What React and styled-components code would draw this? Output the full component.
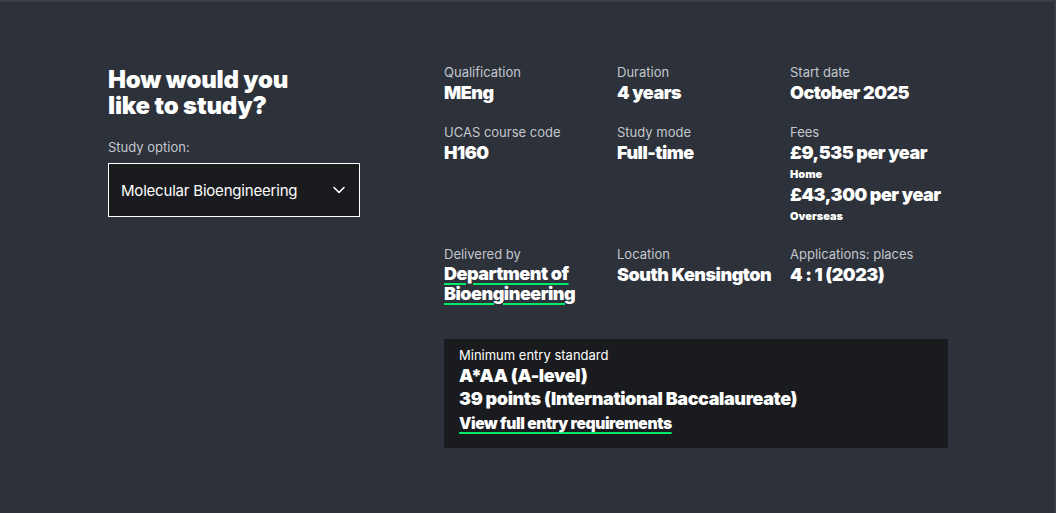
import React from "react";
import styled, { createGlobalStyle } from "styled-components";

const GlobalStyle = createGlobalStyle`
  html, body {
    margin: 0;
    padding: 0;
    background: #2c313a;
  }
  body {
    font-family: Inter, "Noto Sans", sans-serif;
    color: #ffffff;
  }
`;

const Page = styled.div`
  width: 1056px;
  height: 513px;
  box-sizing: border-box;
  background: #2c313a;
  border-top: 2px solid #3a3f47;
  border-right: 2px solid #3a3f47;
  padding: 60px 0 0 108px;
  display: flex;
  flex-direction: row;
  gap: 84px;
`;

const Chooser = styled.div`
  width: 252px;
  padding-top: 5px;
  display: flex;
  flex-direction: column;
`;

const Heading = styled.h2`
  margin: 0 0 18px 0;
  font-size: 24px;
  line-height: 26px;
  font-weight: 900;
  letter-spacing: -0.2px;
`;

const FieldLabel = styled.div`
  font-size: 13px;
  line-height: 20px;
  color: #c3c7cd;
  margin-bottom: 6px;
`;

const Select = styled.div`
  height: 54px;
  box-sizing: border-box;
  border: 1px solid #ffffff;
  background: #191b1e;
  display: flex;
  align-items: center;
  justify-content: space-between;
  padding: 0 13px 0 12px;
  font-size: 15px;
  letter-spacing: -0.2px;
  color: #ffffff;
`;

const Details = styled.div`
  width: 504px;
  display: flex;
  flex-direction: column;
`;

const Grid = styled.div`
  display: grid;
  grid-template-columns: repeat(3, 158px);
  column-gap: 15px;
  row-gap: 18px;
`;

const Item = styled.div`
  display: flex;
  flex-direction: column;
`;

const Label = styled.div`
  font-size: 13px;
  line-height: 20px;
  color: #c3c7cd;
`;

const Value = styled.div`
  font-size: 18px;
  line-height: ${(p) => (p.$tight ? "20px" : "22px")};
  font-weight: 900;
  letter-spacing: -0.5px;
  white-space: ${(p) => (p.$wrap ? "normal" : "nowrap")};
`;

const Note = styled.div`
  font-size: 11px;
  line-height: 20px;
  font-weight: 900;
`;

const Link = styled.a`
  color: #ffffff;
  text-decoration: underline;
  text-decoration-color: #00e96b;
  text-decoration-thickness: 2px;
  text-underline-offset: 3px;
  text-decoration-skip-ink: auto;
`;

const EntryBox = styled.div`
  margin-top: 35px;
  background: #191b1e;
  height: 109px;
  box-sizing: border-box;
  padding: 7px 15px 0 15px;
  display: flex;
  flex-direction: column;
`;

const EntryLabel = styled.div`
  font-size: 13px;
  line-height: 18px;
  color: #ffffff;
`;

const EntryValue = styled.div`
  font-size: 18px;
  line-height: 23px;
  font-weight: 900;
  letter-spacing: -0.4px;
`;

const EntryLink = styled(Link)`
  font-size: 15.6px;
  line-height: 20px;
  font-weight: 900;
  margin-top: 4px;
  letter-spacing: -0.4px;
  align-self: flex-start;
`;

const Chevron = () => (
  <svg width="14" height="14" viewBox="0 0 14 14" fill="none">
    <path d="M2 4.5 L7 9.5 L12 4.5" stroke="#ffffff" strokeWidth="1.6" strokeLinecap="round" strokeLinejoin="round" />
  </svg>
);

export default function App() {
  return (
    <>
      <GlobalStyle />
      <Page>
        <Chooser>
          <Heading>
            How would you
            <br />
            like to study?
          </Heading>
          <FieldLabel>Study option:</FieldLabel>
          <Select>
            <span>Molecular Bioengineering</span>
            <Chevron />
          </Select>
        </Chooser>
        <Details>
          <Grid>
            <Item>
              <Label>Qualification</Label>
              <Value>MEng</Value>
            </Item>
            <Item>
              <Label>Duration</Label>
              <Value>4 years</Value>
            </Item>
            <Item>
              <Label>Start date</Label>
              <Value>October 2025</Value>
            </Item>
            <Item>
              <Label>UCAS course code</Label>
              <Value>H160</Value>
            </Item>
            <Item>
              <Label>Study mode</Label>
              <Value>Full-time</Value>
            </Item>
            <Item>
              <Label>Fees</Label>
              <Value>£9,535 per year</Value>
              <Note>Home</Note>
              <Value>£43,300 per year</Value>
              <Note>Overseas</Note>
            </Item>
            <Item>
              <Label>Delivered by</Label>
              <Value $wrap $tight>
                <Link href="#">Department of Bioengineering</Link>
              </Value>
            </Item>
            <Item>
              <Label>Location</Label>
              <Value>South Kensington</Value>
            </Item>
            <Item>
              <Label>Applications: places</Label>
              <Value>4 : 1 (2023)</Value>
            </Item>
          </Grid>
          <EntryBox>
            <EntryLabel>Minimum entry standard</EntryLabel>
            <EntryValue>A*AA (A-level)</EntryValue>
            <EntryValue>39 points (International Baccalaureate)</EntryValue>
            <EntryLink href="#">View full entry requirements</EntryLink>
          </EntryBox>
        </Details>
      </Page>
    </>
  );
}
